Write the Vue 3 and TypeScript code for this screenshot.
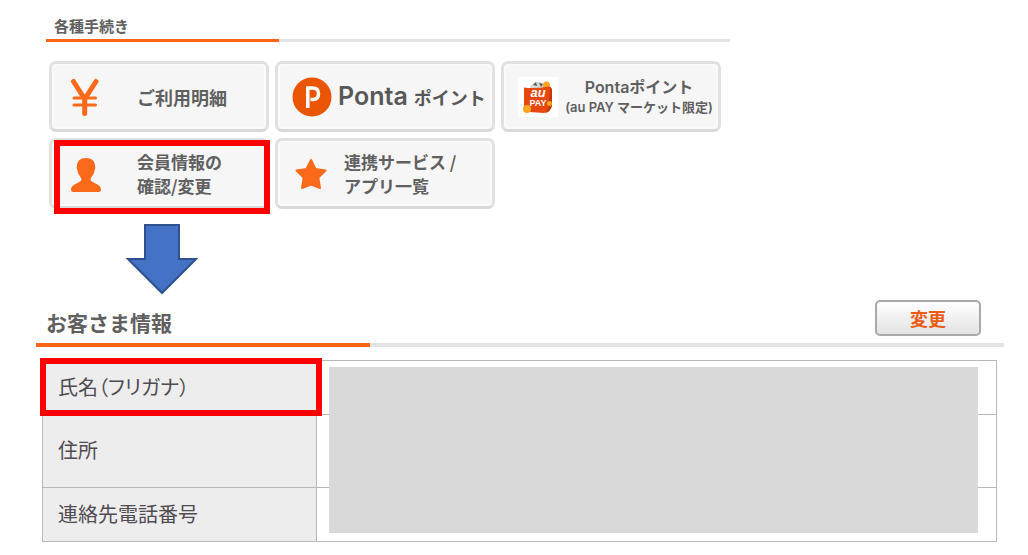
<script setup lang="ts">
interface Service {
  icon: 'yen' | 'ponta' | 'aupay' | 'person' | 'star'
  lines: string[]
  marked?: boolean
}

interface Row {
  label: string
  size: 'short' | 'tall'
  marked?: boolean
}

const services: Service[] = [
  { icon: 'yen', lines: ['ご利用明細'] },
  { icon: 'ponta', lines: ['Ponta', 'ポイント'] },
  { icon: 'aupay', lines: ['Pontaポイント', '(au PAY マーケット限定)'] },
  { icon: 'person', lines: ['会員情報の', '確認/変更'], marked: true },
  { icon: 'star', lines: ['連携サービス /', 'アプリ一覧'] },
]

const rows: Row[] = [
  { label: '氏名（フリガナ）', size: 'short', marked: true },
  { label: '住所', size: 'tall' },
  { label: '連絡先電話番号', size: 'short' },
]
</script>

<template>
  <main class="page">
    <section class="procedures">
      <h2 class="small-title">各種手続き</h2>
      <div class="rule thin"></div>
      <nav class="cards" aria-label="各種手続き">
        <div v-for="s in services" :key="s.icon" class="slot">
          <a href="#" class="card" :class="s.icon">
            <svg v-if="s.icon === 'yen'" class="icon" viewBox="0 0 32 40" aria-hidden="true">
              <g fill="none" stroke="#fb6a1b" stroke-linecap="round">
                <path stroke-width="5" d="M3.500 4.500 14.700 22 26 4.500M14.700 22V36.500" />
                <path stroke-width="3" d="M4 21H25.500M4 28H25.500" />
              </g>
            </svg>
            <svg v-else-if="s.icon === 'ponta'" class="icon" viewBox="0 0 40 40" aria-hidden="true">
              <circle cx="20" cy="20" r="19.500" fill="#ea5504" />
              <path fill="none" stroke="#fff" stroke-width="3.500" d="M15.800 31V11H20.500C25 11 26.500 13 26.500 16.500C26.500 20.500 24.500 22.500 21 22.500H18.500" />
            </svg>
            <svg v-else-if="s.icon === 'aupay'" class="icon" viewBox="0 0 40 40" aria-hidden="true">
              <path fill="#fff" d="M0 0H40V40H0z" />
              <path fill="#d5d8d9" d="M12 12C12 7 16 5 20 5C24 5 28 7 29 12z" />
              <path fill="#555" d="M15 8 18 5 19 9zM21 6 25 7 23 10z" />
              <circle cx="28.500" cy="8" r="3.500" fill="#ffa51e" />
              <path fill="#e8470e" d="M6 10.500Q17 12 31 9.500Q34 10 34 14V28Q33 35 26 36L11 35Q6 34 6 30z" />
              <path fill="#c6380b" d="M32 10Q34 11 34 14V28Q33 34 28 36Q31 31 31 25z" />
              <circle cx="9" cy="32" r="4" fill="#ffa51e" />
              <circle cx="31.500" cy="26.500" r="2.500" fill="#ffa51e" />
              <text class="logo-au" x="20" y="20" text-anchor="middle">au</text>
              <text class="logo-pay" x="20" y="29" text-anchor="middle">PAY</text>
            </svg>
            <svg v-else-if="s.icon === 'person'" class="icon" viewBox="0 0 32 36" aria-hidden="true">
              <path fill="#fb6a1b" d="M16 2C21.500 2 25 5 25 9.500Q26 12 24.500 14.500C24 19 21 20.500 20.500 23.500C21 27 31 28 31 33.500Q31 36 28.500 36H3.500Q1 36 1 33.500C1 28 11 27 11.500 23.500C11 20.500 8 19 7.500 14.500Q6 12 7 9.500C7 5 10.500 2 16 2z" />
            </svg>
            <svg v-else class="icon" viewBox="0 0 32 32" aria-hidden="true">
              <path fill="#fb6a1b" stroke="#fb6a1b" stroke-width="2" stroke-linejoin="round" d="M16 2 20.500 11 30.500 12.500 23.300 19.500 25 30 16 26.500 7 30 8.700 19.500 1.500 12.500 11.500 11z" />
            </svg>
            <span class="label">
              <span v-for="line in s.lines" :key="line" class="line">{{ line }}</span>
            </span>
          </a>
          <span v-if="s.marked" class="mark card-mark"></span>
        </div>
      </nav>
    </section>

    <svg class="arrow" viewBox="0 0 72 72" aria-hidden="true">
      <path fill="#4472c4" stroke="#2f528f" stroke-width="2" d="M19 2H53V36H70L36 70 2 36H19z" />
    </svg>

    <section class="customer">
      <header class="heading">
        <h2 class="big-title">お客さま情報</h2>
        <button type="button" class="change">変更</button>
      </header>
      <div class="rule thick"></div>
      <div class="table-wrap">
        <table class="info">
          <tbody>
            <tr v-for="r in rows" :key="r.label" :class="r.size">
              <th scope="row">
                {{ r.label }}
                <span v-if="r.marked" class="mark row-mark"></span>
              </th>
              <td></td>
            </tr>
          </tbody>
        </table>
        <div class="cover"></div>
      </div>
    </section>
  </main>
</template>

<style>
body {
  margin: 0;
  background: #fff;
}
</style>

<style scoped>
.page {
  padding: 14px 24px 12px 36px;
  font-family: "Noto Sans CJK JP", sans-serif;
  color: #606060;
}
.procedures {
  max-width: 684px;
  margin-left: 10px;
}
h2 {
  margin: 0;
  font-weight: 700;
}
.small-title {
  padding-left: 8px;
  font-size: 15px;
  line-height: 24px;
  padding-bottom: 1px;
}
.rule {
  background: #e4e4e4;
}
.rule::before {
  content: "";
  display: block;
  height: 100%;
  width: 34%;
  background: #fb6514;
}
.thin {
  height: 3px;
}
.thick {
  height: 4px;
}
.thick::before {
  width: 34.5%;
}
.cards {
  display: grid;
  grid-template-columns: repeat(3, 1fr);
  gap: 6px;
  padding: 19px 9px 0 3px;
}
.slot {
  position: relative;
}
.card {
  display: flex;
  align-items: center;
  box-sizing: border-box;
  height: 71px;
  border: 3px solid #e1e1e1;
  border-bottom-color: #d9d9d9;
  border-radius: 7px;
  background: #f6f6f6;
  box-shadow: inset 0 0 0 2px #fafafa;
  color: #606060;
  font-weight: 700;
  font-size: 17px;
  line-height: 24px;
  text-decoration: none;
}
.icon {
  flex: none;
  width: 32px;
}
.line {
  display: block;
  white-space: nowrap;
}
.yen,
.person,
.star {
  padding-left: 18px;
}
.yen,
.person {
  gap: 35px;
}
.yen {
  font-size: 18px;
}
.star {
  padding-left: 17px;
  gap: 17px;
}
.ponta,
.aupay {
  padding-left: 14px;
  gap: 6px;
}
.ponta {
  color: #585858;
  font-size: 18px;
}
.ponta .icon,
.aupay .icon {
  width: 40px;
}
.ponta .label {
  display: flex;
  align-items: baseline;
  gap: 6px;
}
.ponta .line:first-child {
  font-family: Inter, sans-serif;
  font-size: 25px;
  font-weight: 600;
}
.aupay .label {
  flex: 1;
  text-align: center;
  line-height: 20px;
}
.aupay {
  gap: 2px;
  font-family: Inter, "Noto Sans CJK JP", sans-serif;
}
.aupay .line:first-child {
  font-size: 16px;
  font-weight: 600;
}
.aupay .line:last-child {
  font-size: 13px;
  font-weight: 600;
}
.logo-au {
  fill: #fff;
  font: italic 700 13px "Liberation Sans", sans-serif;
}
.logo-pay {
  fill: #fff;
  font: 700 9px "Liberation Sans", sans-serif;
}
.mark {
  position: absolute;
  box-sizing: border-box;
  border: 6px solid #f00;
  pointer-events: none;
}
.card-mark {
  inset: 2px -1px -5px 5px;
}
.arrow {
  display: block;
  width: 72px;
  margin: 14px 0 0 90px;
}
.heading {
  display: flex;
  justify-content: space-between;
  align-items: center;
  padding: 5px 23px 7px 10px;
}
.big-title {
  font-size: 21px;
  line-height: 28px;
  padding-top: 8px;
}
.change {
  width: 106px;
  height: 36px;
  padding: 0;
  border: 2px solid #a9a9a9;
  border-radius: 5px;
  background: linear-gradient(#fff, #e2e2e2);
  color: #ea5b14;
  font-family: "Noto Sans CJK JP", sans-serif;
  font-weight: 700;
  font-size: 18px;
  line-height: 30px;
}
.table-wrap {
  position: relative;
  margin: 13px 7px 0 6px;
}
.info {
  width: 100%;
  border-collapse: collapse;
  table-layout: fixed;
}
th,
td {
  box-sizing: border-box;
  border: 1px solid #b8b8b8;
}
th {
  position: relative;
  width: 274px;
  padding: 0 0 2px 15px;
  background: #ededed;
  color: #504b50;
  font-feature-settings: "palt";
  font-weight: 400;
  font-size: 20px;
  line-height: 28px;
  text-align: left;
}
.short {
  height: 54px;
}
.tall {
  height: 73px;
}
.row-mark {
  inset: -3px -6px -2px -3px;
  z-index: 1;
}
.cover {
  position: absolute;
  inset: 7px 19px 9px 287px;
  background: #d9d9d9;
}
</style>
